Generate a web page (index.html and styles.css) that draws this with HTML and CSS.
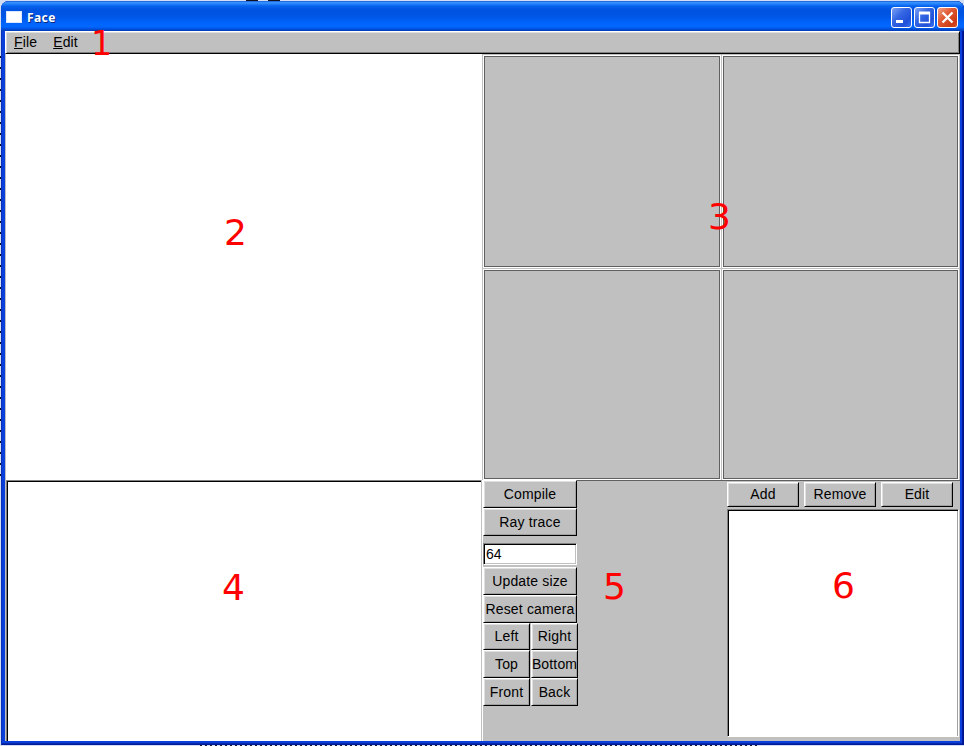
FILE: index.html
```
<!DOCTYPE html>
<html lang="en">
<head>
<meta charset="utf-8">
<title>Face</title>
<link rel="stylesheet" href="styles.css">
</head>
<body>
<div class="window">
  <header class="titlebar">
    <span class="app-icon"></span>
    <span class="title">Face</span>
    <div class="controls">
      <span class="control"><svg viewBox="0 0 21 21"><path d="M5 14.500h7" stroke-width="3"/></svg></span>
      <span class="control"><svg viewBox="0 0 21 21"><path d="M5 6h11" stroke-width="3"/><path d="M5.500 5v10.500h10V5"/></svg></span>
      <span class="control close"><svg viewBox="0 0 21 21"><path d="M5.500 5.500l10 10M15.500 5.500l-10 10" stroke-width="2.300"/></svg></span>
    </div>
  </header>
  <nav class="menubar">
    <span class="menu"><u>F</u>ile</span>
    <span class="menu"><u>E</u>dit</span>
  </nav>
  <main class="content">
    <section class="render"></section>
    <section class="views">
      <div class="view"></div><div class="view"></div>
      <div class="view"></div><div class="view"></div>
    </section>
    <section class="editor"></section>
    <section class="tools">
      <div class="actions">
        <button class="btn">Compile</button>
        <button class="btn">Ray trace</button>
        <input class="size" type="text" value="64">
        <button class="btn">Update size</button>
        <button class="btn">Reset camera</button>
        <div class="cameras">
          <button class="btn">Left</button><button class="btn">Right</button>
          <button class="btn">Top</button><button class="btn">Bottom</button>
          <button class="btn">Front</button><button class="btn">Back</button>
        </div>
      </div>
      <div class="objects">
        <div class="object-buttons">
          <button class="btn">Add</button>
          <button class="btn">Remove</button>
          <button class="btn">Edit</button>
        </div>
        <div class="list"></div>
      </div>
    </section>
  </main>
</div>
<span class="mark m1">1</span>
<span class="mark m2">2</span>
<span class="mark m3">3</span>
<span class="mark m4">4</span>
<span class="mark m5">5</span>
<span class="mark m6">6</span>
</body>
</html>
```
FILE: styles.css
```
* { box-sizing: border-box; }
body {
  margin: 0;
  width: 964px;
  height: 746px;
  padding: 1px 0 1px 1px;
  overflow: hidden;
  position: relative;
  background:
    repeating-linear-gradient(90deg, #223 0 2px, transparent 2px 5px) 200px 745px / 560px 1px no-repeat,
    repeating-linear-gradient(90deg, #112 0 12px, transparent 12px 22px) 246px 0 / 44px 1px no-repeat,
    repeating-linear-gradient(#112 0 2px, transparent 2px 11px) 0 56px / 1px 420px no-repeat,
    #d3def5;
  font: 14px/16px "Liberation Sans", sans-serif;
  letter-spacing: 0.15px;
  color: #000;
}
.window {
  height: 744px;
  display: flex;
  flex-direction: column;
  padding: 0 4px 4px;
  border-radius: 8px 8px 0 0;
  background: #0a3fdc;
  box-shadow: inset 1px 0 #0831b8, inset -1px 0 #00138c, inset -2px -1px #001a9e, inset 0 -2px #0828a8;
}
.titlebar {
  height: 30px;
  flex: none;
  margin: 0 -4px;
  padding: 2px 6px 0 5px;
  display: flex;
  align-items: center;
  border-radius: 8px 8px 0 0;
  background: linear-gradient(#0844c4 0, #3c94ff 1px, #2583fb 3px, #0662ee 5px, #0053e1 9px, #0055e5 15px, #0066ff 23px, #0066fc 26px, #0050dc 28px, #003cb4 30px);
}
.app-icon {
  width: 16px;
  height: 12px;
  border: 1px solid #dce8ff;
  background: #fff;
}
.title {
  margin: 2px 0 0 5px;
  font: bold 12px/16px "Noto Sans", sans-serif;
  letter-spacing: 0.4px;
  color: #fff;
  text-shadow: 1px 1px #0a2a80;
}
.controls {
  display: flex;
  gap: 2px;
  margin-left: auto;
}
.control {
  width: 21px;
  height: 21px;
  border: 1px solid #fff;
  border-radius: 3px;
  background: linear-gradient(135deg, #7ba1f4, #3466e4 40%, #2050d8 75%, #3c74f4);
}
.control.close { background: linear-gradient(135deg, #f0a088, #e05a34 40%, #cc3c14 80%, #d85028); }
.control svg {
  display: block;
  width: 21px;
  height: 21px;
  margin: -1px;
  fill: none;
  stroke: #fff;
  stroke-width: 1.3;
}
.menubar {
  height: 23px;
  flex: none;
  display: flex;
  gap: 16px;
  padding: 2px 8px 0;
  background: #c0c0c0;
  border: 1px solid;
  border-color: #fff #000 #000 #fff;
  box-shadow: inset 1px 1px #dfdfdf, inset -1px -1px #808080;
}
.menu { line-height: 17px; }
.content {
  flex: 1;
  min-height: 0;
  display: grid;
  grid-template-columns: 477px 1fr;
  grid-template-rows: 426px 1fr;
  background: #c0c0c0;
}
.render { background: #fff; border-left: 1px solid #c0c0c0; }
.views {
  display: grid;
  grid-template-columns: 238px 237px;
  grid-template-rows: 213px 211px;
  gap: 1px;
  padding: 1px 0 0 1px;
}
.view {
  border: 1px solid #fff;
  box-shadow: inset 0 0 0 1px #606060;
}
.editor {
  margin: 0 1px 0 1px;
  border: solid #808080;
  border-width: 1px 0 0 1px;
  background: #fff;
  box-shadow: inset 1px 1px #000;
}
.tools {
  display: flex;
  justify-content: space-between;
  border-left: 1px solid #fff;
  box-shadow: inset 0 1px #606060;
}
.actions {
  width: 95px;
  display: flex;
  flex-direction: column;
}
.btn {
  display: flex;
  justify-content: center;
  align-items: center;
  width: 94px;
  height: 28px;
  margin: 0;
  padding: 0;
  border: 1px solid;
  border-color: #fff #000 #000 #fff;
  background: #c0c0c0;
  box-shadow: inset 1px 1px #dfdfdf, inset -1px -1px #a0a0a0;
  font: inherit;
  letter-spacing: inherit;
  color: inherit;
  white-space: nowrap;
}
.size {
  width: 94px;
  height: 22px;
  margin: 7px 0 2px;
  padding: 0 0 0 2px;
  border: 1px solid;
  border-color: #808080 #fff #fff #808080;
  background: #fff;
  box-shadow: inset 1px 1px #000, inset -1px -1px #c0c0c0;
  font: inherit;
  letter-spacing: 0;
}
.cameras {
  display: grid;
  grid-template-columns: 47px 47px;
  grid-template-rows: 27px 28px 28px;
  column-gap: 1px;
}
.cameras .btn { width: 47px; height: auto; }
.cameras .btn:nth-child(-n+2),
.object-buttons .btn { padding-bottom: 1px; }
.objects {
  width: 233px;
  display: flex;
  flex-direction: column;
  padding: 2px 1px 4px 0;
}
.object-buttons { display: flex; gap: 5px; }
.object-buttons .btn { width: 72px; height: 25px; }
.list {
  flex: 1;
  margin-top: 2px;
  border: 1px solid;
  border-color: #808080 #fff #fff #808080;
  background: #fff;
  box-shadow: inset 1px 1px #000, inset -1px 0 #a0a0a0;
}
.mark {
  position: absolute;
  font: 36px/36px "DejaVu Sans", sans-serif;
  letter-spacing: 0;
  color: #f00;
}
.m1 { left: 91px; top: 26px; font-size: 33px; }
.m2 { left: 224px; top: 215px; }
.m3 { left: 708px; top: 199px; }
.m4 { left: 222px; top: 570px; }
.m5 { left: 603px; top: 569px; }
.m6 { left: 832px; top: 568px; }
```
